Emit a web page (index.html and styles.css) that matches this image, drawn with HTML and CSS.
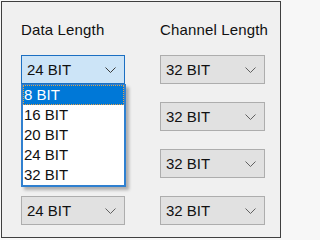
FILE: index.html
```html
<!DOCTYPE html>
<html>
<head>
<meta charset="utf-8">
<link rel="stylesheet" href="styles.css">
</head>
<body>
<div class="frame">
  <div class="grid">
    <div class="col">
      <div class="label">Data Length</div>
      <div class="combo-wrap">
        <div class="combo open"><span>24 BIT</span><svg class="chev" width="11" height="6" viewBox="0 0 11 6"><path d="M0.5 0.5 L5.5 5.5 L10.5 0.5" fill="none" stroke="#3a3a3a" stroke-width="1"/></svg></div>
        <ul class="list">
          <li class="sel">8 BIT</li>
          <li>16 BIT</li>
          <li>20 BIT</li>
          <li>24 BIT</li>
          <li>32 BIT</li>
        </ul>
      </div>
      <div class="combo covered"><span>24 BIT</span><svg class="chev" width="11" height="6" viewBox="0 0 11 6"><path d="M0.5 0.5 L5.5 5.5 L10.5 0.5" fill="none" stroke="#606060" stroke-width="1"/></svg></div>
      <div class="combo covered"><span>24 BIT</span><svg class="chev" width="11" height="6" viewBox="0 0 11 6"><path d="M0.5 0.5 L5.5 5.5 L10.5 0.5" fill="none" stroke="#606060" stroke-width="1"/></svg></div>
      <div class="combo"><span>24 BIT</span><svg class="chev" width="11" height="6" viewBox="0 0 11 6"><path d="M0.5 0.5 L5.5 5.5 L10.5 0.5" fill="none" stroke="#606060" stroke-width="1"/></svg></div>
    </div>
    <div class="col wide">
      <div class="label">Channel Length</div>
      <div class="combo"><span>32 BIT</span><svg class="chev" width="11" height="6" viewBox="0 0 11 6"><path d="M0.5 0.5 L5.5 5.5 L10.5 0.5" fill="none" stroke="#606060" stroke-width="1"/></svg></div>
      <div class="combo"><span>32 BIT</span><svg class="chev" width="11" height="6" viewBox="0 0 11 6"><path d="M0.5 0.5 L5.5 5.5 L10.5 0.5" fill="none" stroke="#606060" stroke-width="1"/></svg></div>
      <div class="combo"><span>32 BIT</span><svg class="chev" width="11" height="6" viewBox="0 0 11 6"><path d="M0.5 0.5 L5.5 5.5 L10.5 0.5" fill="none" stroke="#606060" stroke-width="1"/></svg></div>
      <div class="combo"><span>32 BIT</span><svg class="chev" width="11" height="6" viewBox="0 0 11 6"><path d="M0.5 0.5 L5.5 5.5 L10.5 0.5" fill="none" stroke="#606060" stroke-width="1"/></svg></div>
    </div>
  </div>
</div>
</body>
</html>
```

FILE: styles.css
```css
html, body {
  margin: 0;
  padding: 0;
  background: #f7f7f7;
}
body {
  font-family: "Liberation Sans", Arial, sans-serif;
  font-size: 15px;
  color: #111;
}
.frame {
  margin: 1px 0 0 1px;
  width: 280px;
  height: 237px;
  box-sizing: border-box;
  border: 1px solid #3f3f3f;
  background: #f0f0f0;
  padding: 19px 0 0 19px;
}
.grid {
  display: flex;
  gap: 35px;
}
.col {
  width: 104px;
  display: flex;
  flex-direction: column;
  gap: 18px;
}
.col.wide {
  width: 105px;
}
.label {
  height: 18px;
  line-height: 18px;
  white-space: nowrap;
  margin-bottom: -2px;
  letter-spacing: 0.15px;
}
.combo-wrap {
  position: relative;
  z-index: 2;
}
.combo {
  height: 29px;
  box-sizing: border-box;
  border: 1px solid #adadad;
  background: #e1e1e1;
  display: flex;
  align-items: center;
  justify-content: space-between;
  padding: 0 8px 0 5px;
}
.combo.covered {
  visibility: hidden;
}
.combo.open {
  background: #cce4f7;
  border-color: #1c6fc2;
}
.chev {
  display: block;
}
.list {
  position: absolute;
  left: 0;
  top: 29px;
  width: 105px;
  margin: 0;
  padding: 0;
  list-style: none;
  box-sizing: border-box;
  border: 2px solid #2f80d0;
  border-top-width: 1px;
  background: #fff;
  box-shadow: 3px 3px 3px rgba(0, 0, 0, 0.28);
}
.list li {
  height: 20px;
  line-height: 20px;
  padding-left: 1px;
  box-sizing: border-box;
}
.list li.sel {
  background: #0078d7;
  color: #fff;
  border: 1px dotted #e3a04a;
  line-height: 18px;
  padding-left: 0;
}
```
